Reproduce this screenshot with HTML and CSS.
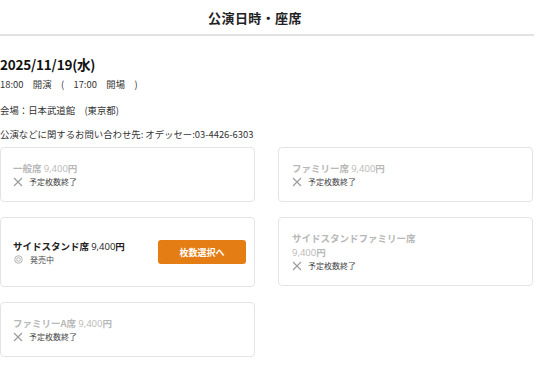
FILE: index.html
```html
<!DOCTYPE html>
<html lang="ja">
<head>
<meta charset="utf-8">
<link rel="stylesheet" href="styles.css">
</head>
<body>
<div class="page">
  <header class="head"><h1 class="title">公演日時・座席</h1></header>
  <section class="info">
    <div class="date">2025/11/19(水)</div>
    <div class="time">18:00　開演　(　17:00　開場　)</div>
    <div class="venue">会場：日本武道館　(東京都)</div>
    <div class="contact">公演などに関するお問い合わせ先: オデッセー:03-4426-6303</div>
  </section>
  <div class="grid">
    <div class="card off">
      <div class="body">
        <div class="name">一般席 <span class="num">9,400</span>円</div>
        <div class="status"><svg class="x" viewBox="0 0 10 10"><path d="M1 1L9 9M9 1L1 9"/></svg>予定枚数終了</div>
      </div>
    </div>
    <div class="card off">
      <div class="body">
        <div class="name">ファミリー席 <span class="num">9,400</span>円</div>
        <div class="status"><svg class="x" viewBox="0 0 10 10"><path d="M1 1L9 9M9 1L1 9"/></svg>予定枚数終了</div>
      </div>
    </div>
    <div class="card on">
      <div class="body">
        <div class="name">サイドスタンド席 <span class="num">9,400</span>円</div>
        <div class="status"><svg class="o" viewBox="0 0 10 10"><circle cx="5" cy="5" r="4.2"/><circle cx="5" cy="5" r="2"/></svg>発売中</div>
      </div>
      <button class="btn">枚数選択へ</button>
    </div>
    <div class="card off">
      <div class="body">
        <div class="name">サイドスタンドファミリー席<br><span class="num">9,400</span>円</div>
        <div class="status"><svg class="x" viewBox="0 0 10 10"><path d="M1 1L9 9M9 1L1 9"/></svg>予定枚数終了</div>
      </div>
    </div>
    <div class="card off">
      <div class="body">
        <div class="name">ファミリーA席 <span class="num">9,400</span>円</div>
        <div class="status"><svg class="x" viewBox="0 0 10 10"><path d="M1 1L9 9M9 1L1 9"/></svg>予定枚数終了</div>
      </div>
    </div>
  </div>
</div>
</body>
</html>
```
FILE: styles.css
```css
* { box-sizing: border-box; }
body {
  margin: 0;
  background: #fff;
  font-family: "Noto Sans CJK JP", "Noto Sans", sans-serif;
  color: #222;
}
.page { width: 534px; }
.head {
  height: 36px;
  border-bottom: 2px solid #e2e2e2;
  display: flex;
  align-items: center;
  justify-content: center;
  padding-right: 24px;
}
.title {
  margin: 0;
  font-size: 13px;
  font-weight: bold;
  color: #222;
  letter-spacing: 0.4px;
}
.info { padding-top: 18px; }
.date {
  font-size: 13.5px;
  font-weight: bold;
  line-height: 20px;
  color: #111;
  letter-spacing: -0.2px;
}
.time { font-size: 9.4px; line-height: 14px; margin-top: 3px; color: #333; }
.venue { font-size: 9.4px; line-height: 14px; margin-top: 12px; color: #333; }
.contact { font-size: 9.4px; line-height: 14px; margin-top: 10px; color: #333; }
.grid {
  margin-top: 6px;
  display: grid;
  grid-template-columns: 255px 255px;
  column-gap: 23px;
  row-gap: 15px;
  align-items: start;
}
.card {
  border: 1px solid #e4e4e4;
  border-radius: 4px;
  padding: 13px 8px 13px 12px;
  display: flex;
  align-items: center;
  justify-content: space-between;
  min-height: 54px;
}
.card.on { min-height: 70px; }
.card:nth-child(even) { padding-left: 13px; }
.name {
  font-size: 9.5px;
  line-height: 14px;
  font-weight: bold;
  color: #b8b8b8;
}
.num { font-weight: normal; font-family: "Open Sans", "Noto Sans", sans-serif; }
.on .name { color: #222; }
.status {
  font-size: 8px;
  line-height: 12px;
  color: #444;
  display: flex;
  align-items: center;
}
.x {
  width: 10px;
  height: 10px;
  margin-right: 6px;
  stroke: #9a9a9a;
  stroke-width: 1.1;
  fill: none;
}
.o {
  width: 9px;
  height: 9px;
  margin-left: 1px;
  margin-right: 7px;
  stroke: #aaa;
  stroke-width: 1;
  fill: none;
}
.btn {
  width: 88px;
  height: 24px;
  border: none;
  border-radius: 3px;
  background: #e47d14;
  color: #fff;
  font-family: inherit;
  font-size: 9px;
  font-weight: bold;
}
```
